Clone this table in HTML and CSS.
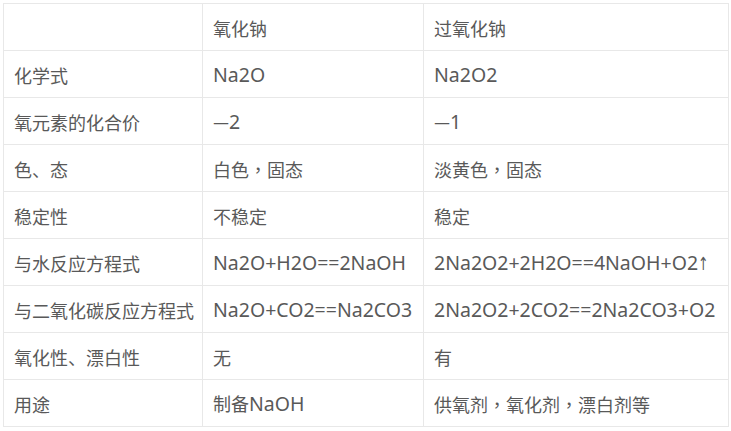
FILE: index.html
```html
<!DOCTYPE html>
<html lang="zh">
<head>
<meta charset="utf-8">
<link rel="stylesheet" href="styles.css">
</head>
<body>
<table class="cmp">
  <colgroup><col class="c1"><col class="c2"><col class="c3"></colgroup>
  <tr><td></td><td>氧化钠</td><td>过氧化钠</td></tr>
  <tr><td>化学式</td><td><span class="lat">Na2O</span></td><td><span class="lat">Na2O2</span></td></tr>
  <tr><td>氧元素的化合价</td><td>—<span class="lat">2</span></td><td>—<span class="lat">1</span></td></tr>
  <tr><td>色、态</td><td>白色<span class="pc" lang="zh-Hant">，</span>固态</td><td>淡黄色<span class="pc" lang="zh-Hant">，</span>固态</td></tr>
  <tr><td>稳定性</td><td>不稳定</td><td>稳定</td></tr>
  <tr><td>与水反应方程式</td><td><span class="lat">Na2O+H2O==2NaOH</span></td><td><span class="lat">2Na2O2+2H2O==4NaOH+O2<span class="arw">↑</span></span></td></tr>
  <tr><td>与二氧化碳反应方程式</td><td><span class="lat">Na2O+CO2==Na2CO3</span></td><td><span class="lat">2Na2O2+2CO2==2Na2CO3+O2</span></td></tr>
  <tr><td>氧化性、漂白性</td><td>无</td><td>有</td></tr>
  <tr><td>用途</td><td>制备<span class="lat">NaOH</span></td><td>供氧剂<span class="pc" lang="zh-Hant">，</span>氧化剂<span class="pc" lang="zh-Hant">，</span>漂白剂等</td></tr>
</table>
</body>
</html>
```
FILE: styles.css
```css
html, body {
  margin: 0;
  padding: 0;
  background: #ffffff;
}
body {
  padding: 3px 0 0 3px;
  font-family: "Noto Sans CJK SC", "Noto Sans", sans-serif;
  color: #595959;
}
.cmp {
  border-collapse: collapse;
  table-layout: fixed;
  width: 725px;
}
.c1 { width: 199px; }
.c2 { width: 221px; }
.c3 { width: 305px; }
.cmp td {
  border: 1px solid #e8e8e8;
  height: 47px;
  padding: 1px 0 0 10px;
  box-sizing: border-box;
  font-size: 18px;
  line-height: 24px;
  white-space: nowrap;
  vertical-align: middle;
}
.lat {
  font-family: "Noto Sans", "DejaVu Sans", sans-serif;
  font-size: 19.5px;
}
.arw {
  font-family: "DejaVu Sans", sans-serif;
  font-size: 18px;
  display: inline-block;
  transform: scaleX(0.7);
  transform-origin: left center;
}
.pc {
  font-family: "Noto Sans CJK TC", "Noto Sans CJK SC", sans-serif;
}
```
